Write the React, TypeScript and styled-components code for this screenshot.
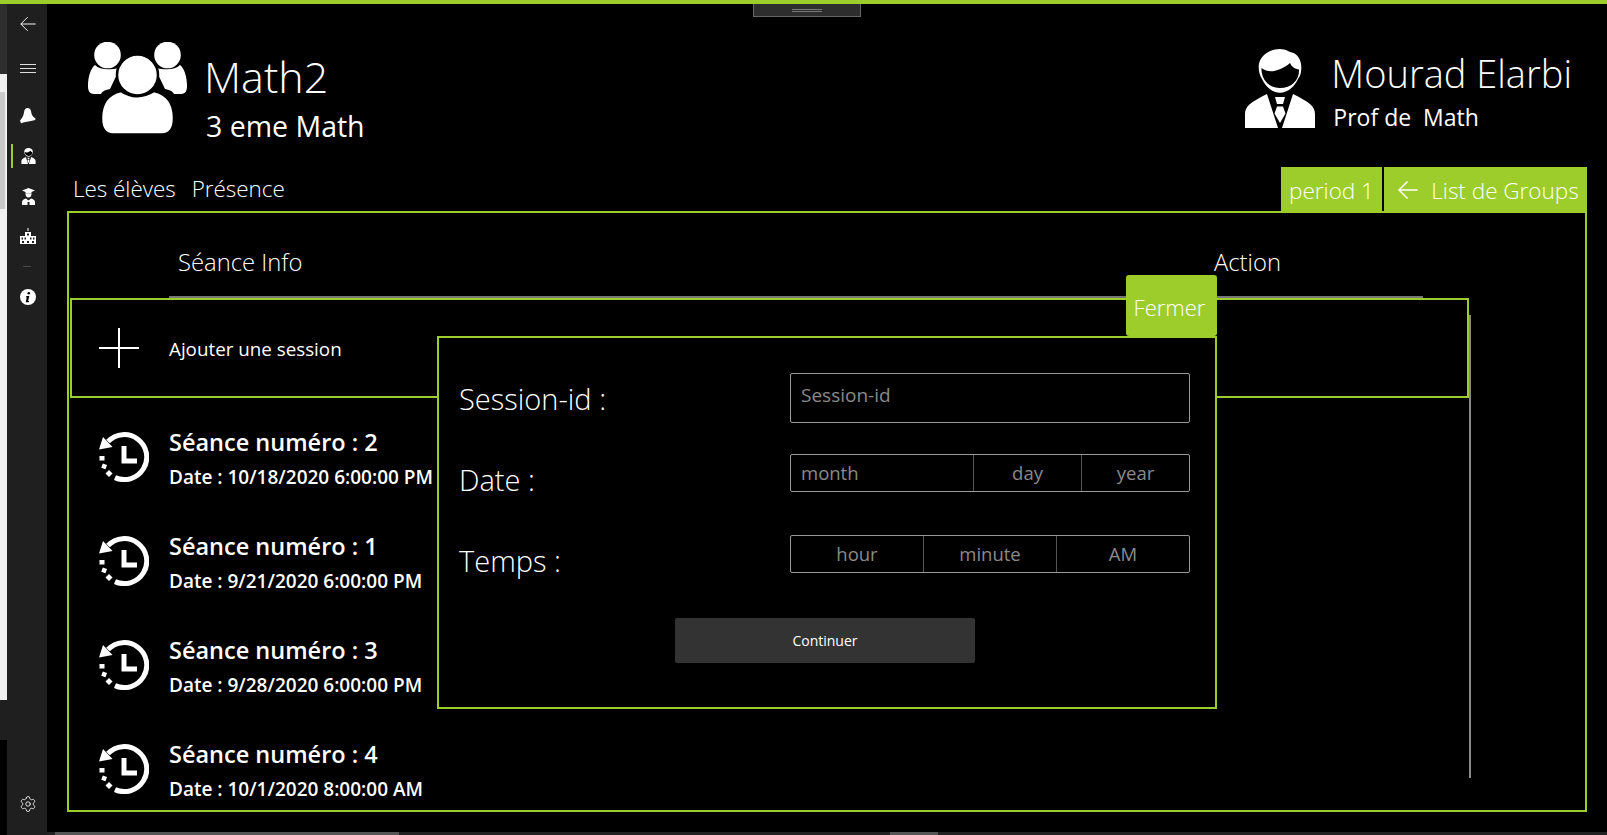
import React, { FC } from 'react';
import styled, { createGlobalStyle } from 'styled-components';
import { Settings } from 'lucide-react';

const GREEN = '#9dcd2b';
const FONT = '"Open Sans", "Noto Sans", sans-serif';

const Global = createGlobalStyle`
  html, body {
    margin: 0;
    height: 100%;
    background: #000;
    overflow: hidden;
  }

  #root {
    height: 100%;
  }
`;

const Page = styled.div`
  position: relative;
  display: flex;
  flex-direction: column;
  width: 1607px;
  height: 835px;
  overflow: hidden;
  background: #000;
  color: #fff;
  font-family: ${FONT};
`;

const TopBar = styled.div`
  flex: 0 0 4px;
  background: ${GREEN};
`;

const DragHandle = styled.div`
  position: absolute;
  top: 4px;
  left: 753px;
  width: 108px;
  height: 13px;
  box-sizing: border-box;
  background: #2d2d2d;
  border: 1px solid #666;
  border-top: 0;

  &::after {
    content: '';
    position: absolute;
    top: 5px;
    left: 38px;
    width: 30px;
    height: 1px;
    border-top: 1px solid #777;
    border-bottom: 1px solid #777;
  }
`;

const Body = styled.div`
  flex: 1;
  display: flex;
  min-height: 0;
`;

// Window behind, only a sliver shows at the left
const BackWindow = styled.div`
  flex: 0 0 7px;
  display: flex;
  flex-direction: column;
`;

const BackTitle = styled.div`
  flex: 0 0 70px;
  background: #2e2e2e;
`;

const BackContent = styled.div`
  flex: 0 0 626px;
  background: #f0f0f0;
  padding-top: 18px;
  box-sizing: border-box;
`;

const BackScroll = styled.div`
  width: 5px;
  height: 117px;
  background: #c8c8c8;
`;

const BackFooter = styled.div`
  flex: 0 0 40px;
  background: #1f1f1f;
`;

const Sidebar = styled.nav`
  flex: 0 0 40px;
  display: flex;
  flex-direction: column;
  background: #1f1f1f;
  padding-bottom: 11px;
  box-sizing: border-box;
`;

const NavSlot = styled.div<{ $active?: boolean; $gap?: number }>`
  position: relative;
  flex: 0 0 40px;
  display: flex;
  align-items: center;
  justify-content: center;
  margin-bottom: ${({ $gap }) => $gap ?? 0}px;
  padding-left: 2px;
  box-sizing: border-box;

  &::before {
    content: '';
    display: ${({ $active }) => ($active ? 'block' : 'none')};
    position: absolute;
    left: 4px;
    top: 8px;
    width: 2px;
    height: 24px;
    background: ${GREEN};
  }
`;

const NavSeparator = styled.div`
  flex: 0 0 20px;
  display: flex;
  align-items: center;
  justify-content: center;
  margin-bottom: 1px;

  &::after {
    content: '';
    width: 8px;
    height: 1px;
    background: #4c4c4c;
  }
`;

const NavSpacer = styled.div`
  flex: 1;
`;

const Main = styled.main`
  flex: 1;
  display: flex;
  flex-direction: column;
  min-width: 0;
`;

const Header = styled.header`
  flex: 0 0 163px;
  display: flex;
  justify-content: space-between;
  padding: 38px 35px 0 41px;
  box-sizing: border-box;
`;

const HeaderGroup = styled.div`
  display: flex;
  align-items: flex-start;
`;

const TitleBlock = styled.div<{ $left: number; $top: number }>`
  display: flex;
  flex-direction: column;
  margin-left: ${({ $left }) => $left}px;
  padding-top: ${({ $top }) => $top}px;
`;

const BigTitle = styled.div<{ $size: number; $line: number }>`
  font-size: ${({ $size }) => $size}px;
  line-height: ${({ $line }) => $line}px;
  font-weight: 300;
  white-space: nowrap;
`;

const SubTitle = styled.div<{ $size: number; $line: number; $indent: number }>`
  font-size: ${({ $size }) => $size}px;
  line-height: ${({ $line }) => $line}px;
  margin-left: ${({ $indent }) => $indent}px;
  font-weight: 400;
  white-space: pre;
`;

const TeacherWrap = styled.div`
  padding-top: 7px;
`;

const TabRow = styled.div`
  flex: 0 0 44px;
  min-height: 0;
  display: flex;
  align-items: flex-start;
  justify-content: space-between;
  padding: 0 20px 0 26px;
  box-sizing: border-box;
`;

const Tabs = styled.div`
  display: flex;
  gap: 16px;
  font-size: 22.4px;
  font-weight: 300;
  line-height: 43px;
`;

const Tab = styled.span`
  white-space: nowrap;
`;

const TabActions = styled.div`
  display: flex;
  gap: 2px;
`;

const GreenButton = styled.div<{ $width: number; $shift?: number }>`
  width: ${({ $width }) => $width}px;
  height: 46px;
  display: flex;
  align-items: center;
  justify-content: center;
  gap: 13px;
  padding-left: ${({ $shift }) => $shift ?? 0}px;
  box-sizing: border-box;
  background: ${GREEN};
  font-size: 22.5px;
  font-weight: 300;
  white-space: nowrap;
`;

const Panel = styled.section`
  position: relative;
  flex: 0 0 601px;
  margin: 0 20px 0 20px;
  border: 2px solid ${GREEN};
  box-sizing: border-box;
  display: flex;
  flex-direction: column;
  overflow: hidden;
`;

const TableHead = styled.div`
  flex: 0 0 85px;
  display: flex;
  align-items: flex-start;
  margin: 0 162px 0 100px;
  border-bottom: 2px solid #777;
  box-sizing: border-box;
`;

const HeadCell = styled.div<{ $width?: number }>`
  width: ${({ $width }) => ($width ? `${$width}px` : 'auto')};
  padding-top: 29px;
  padding-left: 9px;
  font-size: 23.8px;
  line-height: 40px;
  font-weight: 300;
  box-sizing: border-box;
`;

const AddRow = styled.div`
  flex: 0 0 100px;
  display: flex;
  align-items: center;
  gap: 30px;
  margin: 0 116px 0 1px;
  padding-left: 27px;
  border: 2px solid ${GREEN};
  box-sizing: border-box;
  font-size: 18.8px;
`;

const PlusIcon = styled.div`
  position: relative;
  width: 40px;
  height: 40px;

  &::before,
  &::after {
    content: '';
    position: absolute;
    background: #fff;
  }

  &::before {
    left: 0;
    right: 0;
    top: 19px;
    height: 2px;
  }

  &::after {
    top: 0;
    bottom: 0;
    left: 19px;
    width: 2px;
  }
`;

const AddLabel = styled.span`
  margin-top: 2px;
`;

const SessionList = styled.div`
  padding-top: 7px;
`;

const SessionRow = styled.div`
  height: 104px;
  display: flex;
  align-items: center;
  gap: 20px;
  padding-left: 30px;
`;

const SessionText = styled.div`
  display: flex;
  flex-direction: column;
  margin-top: 5px;
`;

const SessionTitle = styled.div`
  font-size: 23.5px;
  line-height: 35px;
  font-weight: 600;
  white-space: nowrap;
`;

const SessionDate = styled.div`
  font-size: 19px;
  line-height: 35px;
  font-weight: 600;
  white-space: nowrap;
`;

const ListScroll = styled.div`
  position: absolute;
  top: 102px;
  left: 1400px;
  width: 2px;
  height: 463px;
  background: #888;
`;

const BottomScroll = styled.div`
  flex: 0 0 3px;
  margin-top: 20px;
  display: flex;
  background: #222;
`;

const BottomThumb = styled.div<{ $left: number; $width: number; $color: string }>`
  margin-left: ${({ $left }) => $left}px;
  width: ${({ $width }) => $width}px;
  background: ${({ $color }) => $color};
`;

const Modal = styled.div`
  position: absolute;
  left: 437px;
  top: 336px;
  width: 780px;
  height: 373px;
  box-sizing: border-box;
  padding: 35px 25px 0 20px;
  background: #000;
  border: 2px solid ${GREEN};
`;

const CloseButton = styled.div`
  position: absolute;
  right: -2px;
  top: -63px;
  width: 91px;
  height: 61px;
  display: flex;
  align-items: center;
  justify-content: center;
  padding: 2px 4px 0 0;
  box-sizing: border-box;
  background: ${GREEN};
  border-radius: 3px;
  font-size: 22px;
  font-weight: 300;
`;

const FormRow = styled.div<{ $height: number; $after: number }>`
  display: flex;
  justify-content: space-between;
  align-items: flex-start;
  height: ${({ $height }) => $height}px;
  margin-bottom: ${({ $after }) => $after}px;
`;

const FormLabel = styled.div`
  font-size: 29px;
  font-weight: 300;
  line-height: 52px;
`;

const TextBox = styled.div`
  width: 400px;
  height: 100%;
  box-sizing: border-box;
  padding: 0 10px;
  border: 1px solid #999;
  border-radius: 2px;
  color: #8a8a8a;
  font-size: 19px;
  line-height: 42px;
`;

const Picker = styled.div<{ $columns: string }>`
  display: grid;
  grid-template-columns: ${({ $columns }) => $columns};
  width: 400px;
  height: 100%;
  box-sizing: border-box;
  border: 1px solid #999;
  border-radius: 2px;
`;

const PickerCell = styled.div<{ $start?: boolean }>`
  padding: 0 10px;
  border-left: 1px solid #555;
  color: #8a8a8a;
  font-size: 18.5px;
  line-height: 36px;
  text-align: ${({ $start }) => ($start ? 'left' : 'center')};

  &:first-child {
    border-left: 0;
  }
`;

const SubmitRow = styled.div`
  display: flex;
  padding-left: 216px;
`;

const SubmitButton = styled.div`
  width: 300px;
  height: 45px;
  display: flex;
  align-items: center;
  justify-content: center;
  background: #333;
  border-radius: 2px;
  font-size: 14px;
`;

const ThinArrow: FC<{ size: number; weight: number }> = ({ size, weight }) => (
  <svg width={size} height={size} viewBox='0 0 20 20' fill='none' stroke='#fff' strokeWidth={weight}>
    <path d='M19.5 10H1M9.5 1.5L1 10l8.5 8.5' />
  </svg>
);

const HamburgerIcon: FC = () => (
  <svg width='16' height='9' viewBox='0 0 16 9' stroke='#ddd' strokeWidth='1'>
    <path d='M0 .5h16M0 4.5h16M0 8.5h16' />
  </svg>
);

const BellIcon: FC = () => (
  <svg width='16' height='16' viewBox='0 0 16 16' fill='#fff'>
    <path d='M7.500 0C9.500 0 11 1.500 11.200 4c.3 3 1.800 5 4.300 6.500.5 1.500-1.500 2-4.500 2.500l-8 1.500c-1 1-2 1-2.500-.5L0 12.500C2 10 3.500 8 4 4.500 4.300 1.500 5.500 0 7.500 0z' />
  </svg>
);

const TeacherIcon: FC<{ width: number; height: number }> = ({ width, height }) => (
  <svg width={width} height={height} viewBox='0 0 70 79'>
    <path
      fill='#fff'
      d='M35 0c6 0 9 3 12 3.500 6 1.500 9.300 8 9.300 14.500 0 6-1 9-3.300 12-3 7-10 13.700-18 13.700S20 37 17 30c-2-3-3.300-7-3.300-12C13.700 8 23 0 35 0z'
    />
    <path
      fill='#000'
      d='M16.500 19c5 4 11 4 16 2 5-1.500 9-4 12.500-7 1.500 3.500 5 6 9 6.500.5 10.500-7.500 18.500-19 18.500S16 30 16.500 19z'
    />
    <path fill='#fff' d='M0 79V65c0-8 6-12 22-20l11 34zM70 79V65c0-8-6-12-22-20L37 79z' />
    <path fill='#fff' d='M30 48h10l-2 7h-6zM32 57.500h6l2.500 7L35 74l-5.500-9.500z' />
  </svg>
);

const StudentIcon: FC = () => (
  <svg width='13' height='17' viewBox='0 0 13 17' fill='#fff'>
    <path d='M6.500 0L13 2.500 9.500 4v1.500h-6V4L0 2.500z' />
    <path d='M3.500 5.500h6c0 2.500-1 4-3 4s-3-1.500-3-4z' />
    <path d='M0 17v-3c0-2 2-3 4-3.500l2.500 2 2.500-2c2 .5 4 1.500 4 3.500v3H7.500v-3h-2v3z' />
  </svg>
);

const SchoolIcon: FC = () => (
  <svg width='16' height='16' viewBox='0 0 16 16' fill='#fff'>
    <path d='M7.500 0h1v3h-1z' />
    <path fillRule='evenodd' d='M5 4h6v4h5v8H0V8h5zM7 5.500v2h2v-2zM1.500 9.500v2H3v-2zM4.500 9.500v2H6v-2zM10 9.500v2h1.500v-2zM13 9.500v2h1.500v-2zM2 13v2h2v-2zM7 13v2h2v-2zM12 13v2h2v-2z' />
  </svg>
);

const InfoIcon: FC = () => (
  <svg width='16' height='16' viewBox='0 0 16 16'>
    <circle cx='8' cy='8' r='8' fill='#fff' />
    <circle cx='8.800' cy='4.300' r='1.300' fill='#000' />
    <path d='M6.300 7h3l-1.200 5h1l-.3 1.200H5.700l1.100-5h-.8z' fill='#000' />
  </svg>
);

const GroupIcon: FC = () => (
  <svg width='99' height='92' viewBox='0 0 99 92' fill='#fff'>
    <circle cx='19.500' cy='13' r='13.300' />
    <circle cx='79.500' cy='13' r='13.300' />
    <path d='M7 23c5 5 13 5 25 3L22 47c-6 1-8 3-9 5H6c-5 0-6-4-6-8 0-10 3-18 7-21z' />
    <path d='M92 23c-5 5-13 5-25 3l10 21c6 1 8 3 9 5h7c5 0 6-4 6-8 0-10-3-18-7-21z' />
    <circle cx='49.500' cy='33' r='20.500' stroke='#000' strokeWidth='2.500' />
    <path
      stroke='#000'
      strokeWidth='2.500'
      d='M13 76c0-15 7-24 20-27 10 7 22 7 33 0 13 3 20 12 20 27 0 11-4 16.500-12 16.500H25C17 92.500 13 87 13 76z'
    />
  </svg>
);

const HistoryIcon: FC = () => (
  <svg width='50' height='50' viewBox='0 0 50 50' fill='none' stroke='#fff' strokeWidth='5'>
    <path d='M9 9.500A22.500 22.500 0 1 1 16 45.600' />
    <path d='M25 14v15h13' />
    <path d='M0 17.500L4 5l9.500 10z' fill='#fff' stroke='none' />
    <g fill='#fff' stroke='none'>
      <rect x='.5' y='24' width='5' height='4.500' />
      <rect x='3' y='32' width='4.500' height='4.500' transform='rotate(20 5 34)' />
      <rect x='7.500' y='39' width='5' height='5' transform='rotate(45 10 41.500)' />
    </g>
  </svg>
);

const sessions = [
  { number: 2, date: '10/18/2020 6:00:00 PM' },
  { number: 1, date: '9/21/2020 6:00:00 PM' },
  { number: 3, date: '9/28/2020 6:00:00 PM' },
  { number: 4, date: '10/1/2020 8:00:00 AM' }
];

const App: FC = () => (
  <Page>
    <Global />
    <TopBar />
    <DragHandle />
    <Body>
      <BackWindow>
        <BackTitle />
        <BackContent>
          <BackScroll />
        </BackContent>
        <BackFooter />
      </BackWindow>
      <Sidebar>
        <NavSlot $gap={4}><ThinArrow size={16} weight={1.2} /></NavSlot>
        <NavSlot $gap={8}><HamburgerIcon /></NavSlot>
        <NavSlot><BellIcon /></NavSlot>
        <NavSlot $active><TeacherIcon width={15} height={16} /></NavSlot>
        <NavSlot><StudentIcon /></NavSlot>
        <NavSlot><SchoolIcon /></NavSlot>
        <NavSeparator />
        <NavSlot><InfoIcon /></NavSlot>
        <NavSpacer />
        <NavSlot><Settings size={18} strokeWidth={1.1} color='#fff' /></NavSlot>
      </Sidebar>
      <Main>
        <Header>
          <HeaderGroup>
            <GroupIcon />
            <TitleBlock $left={17} $top={5}>
              <BigTitle $size={43} $line={60}>Math2</BigTitle>
              <SubTitle $size={28.5} $line={38} $indent={2}>3 eme Math</SubTitle>
            </TitleBlock>
          </HeaderGroup>
          <HeaderGroup>
            <TeacherWrap>
              <TeacherIcon width={70} height={79} />
            </TeacherWrap>
            <TitleBlock $left={16} $top={6}>
              <BigTitle $size={38} $line={50}>Mourad Elarbi</BigTitle>
              <SubTitle $size={23} $line={38} $indent={2}>{'Prof de  Math'}</SubTitle>
            </TitleBlock>
          </HeaderGroup>
        </Header>
        <TabRow>
          <Tabs>
            <Tab>Les élèves</Tab>
            <Tab>Présence</Tab>
          </Tabs>
          <TabActions>
            <GreenButton $width={101}>period 1</GreenButton>
            <GreenButton $width={203} $shift={6}>
              <ThinArrow size={20} weight={1.5} />
              List de Groups
            </GreenButton>
          </TabActions>
        </TabRow>
        <Panel>
          <TableHead>
            <HeadCell $width={1036}>Séance Info</HeadCell>
            <HeadCell>Action</HeadCell>
          </TableHead>
          <AddRow>
            <PlusIcon />
            <AddLabel>Ajouter une session</AddLabel>
          </AddRow>
          <SessionList>
            {sessions.map(session => (
              <SessionRow key={session.number}>
                <HistoryIcon />
                <SessionText>
                  <SessionTitle>Séance numéro : {session.number}</SessionTitle>
                  <SessionDate>Date : {session.date}</SessionDate>
                </SessionText>
              </SessionRow>
            ))}
          </SessionList>
          <ListScroll />
        </Panel>
        <BottomScroll>
          <BottomThumb $left={8} $width={344} $color='#555' />
          <BottomThumb $left={491} $width={48} $color='#555' />
        </BottomScroll>
      </Main>
    </Body>
    <Modal>
      <CloseButton>Fermer</CloseButton>
      <FormRow $height={50} $after={31}>
        <FormLabel>Session-id :</FormLabel>
        <TextBox>Session-id</TextBox>
      </FormRow>
      <FormRow $height={38} $after={43}>
        <FormLabel>Date :</FormLabel>
        <Picker $columns='182px 108px 1fr'>
          <PickerCell $start>month</PickerCell>
          <PickerCell>day</PickerCell>
          <PickerCell>year</PickerCell>
        </Picker>
      </FormRow>
      <FormRow $height={38} $after={45}>
        <FormLabel>Temps :</FormLabel>
        <Picker $columns='132px 133px 1fr'>
          <PickerCell>hour</PickerCell>
          <PickerCell>minute</PickerCell>
          <PickerCell>AM</PickerCell>
        </Picker>
      </FormRow>
      <SubmitRow>
        <SubmitButton>Continuer</SubmitButton>
      </SubmitRow>
    </Modal>
  </Page>
);

export default App;
